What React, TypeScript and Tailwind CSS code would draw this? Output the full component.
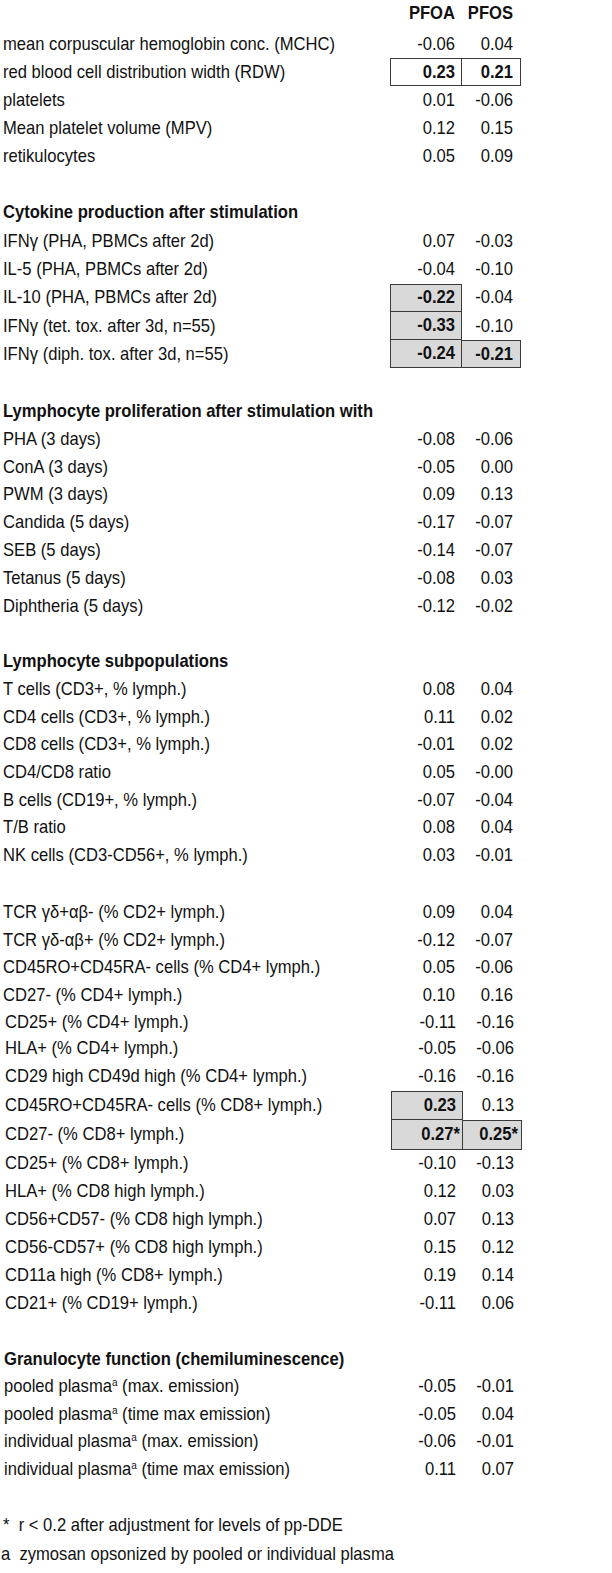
import type { ReactNode } from 'react';

type Row = {
  label?: ReactNode;
  a?: string;
  b?: string;
  h: string;
  head?: boolean;
  shift?: boolean;
  lp?: string;
  ac?: string;
  bc?: string;
};

const line = 'border-[#3a3a3a]';
const gray = 'bg-[#d9d9d9]';

// the source text is a little taller than plain Arial at the same width
const T = ({ children }: { children?: ReactNode }) => (
  <span className="inline-block whitespace-pre scale-y-[1.14]">{children}</span>
);

const Sup = () => <sup className="text-[10px] top-[-0.55em]">a</sup>;

const rows: Row[] = [
  { label: 'mean corpuscular hemoglobin conc. (MCHC)', a: '-0.06', b: '0.04', h: 'h-[28.2px]' },
  {
    label: 'red blood cell distribution width (RDW)', a: '0.23', b: '0.21', h: 'h-[28.2px]',
    ac: `border ${line} font-bold pr-[6px]`, bc: `border border-l-0 ${line} font-bold pr-[7px]`,
  },
  { label: 'platelets', a: '0.01', b: '-0.06', h: 'h-[28.2px]' },
  { label: 'Mean platelet volume (MPV)', a: '0.12', b: '0.15', h: 'h-[28.2px]' },
  { label: 'retikulocytes', a: '0.05', b: '0.09', h: 'h-[28.2px]' },
  { h: 'h-[27.7px]' },
  { label: 'Cytokine production after stimulation', head: true, h: 'h-[28.3px]' },
  { label: 'IFNγ (PHA, PBMCs after 2d)', a: '0.07', b: '-0.03', h: 'h-[28.3px]' },
  { label: 'IL-5 (PHA, PBMCs after 2d)', a: '-0.04', b: '-0.10', h: 'h-[28.3px]' },
  {
    label: 'IL-10 (PHA, PBMCs after 2d)', a: '-0.22', b: '-0.04', h: 'h-[28.3px]',
    ac: `border ${line} ${gray} font-bold pr-[6px]`,
  },
  {
    label: 'IFNγ (tet. tox. after 3d, n=55)', a: '-0.33', b: '-0.10', h: 'h-[28.3px]',
    ac: `border border-t-0 ${line} ${gray} font-bold pr-[6px]`,
  },
  {
    label: 'IFNγ (diph. tox. after 3d, n=55)', a: '-0.24', b: '-0.21', h: 'h-[28.3px]',
    ac: `border border-t-0 ${line} ${gray} font-bold pr-[6px]`,
    bc: `border border-l-0 ${line} ${gray} font-bold pr-[7px]`,
  },
  { h: 'h-[29.2px]' },
  { label: 'Lymphocyte proliferation after stimulation with', head: true, h: 'h-[27.8px]' },
  { label: 'PHA (3 days)', a: '-0.08', b: '-0.06', h: 'h-[27.8px]' },
  { label: 'ConA (3 days)', a: '-0.05', b: '0.00', h: 'h-[27.8px]' },
  { label: 'PWM (3 days)', a: '0.09', b: '0.13', h: 'h-[27.8px]' },
  { label: 'Candida (5 days)', a: '-0.17', b: '-0.07', h: 'h-[27.8px]' },
  { label: 'SEB (5 days)', a: '-0.14', b: '-0.07', h: 'h-[27.8px]' },
  { label: 'Tetanus (5 days)', a: '-0.08', b: '0.03', h: 'h-[27.8px]' },
  { label: 'Diphtheria (5 days)', a: '-0.12', b: '-0.02', h: 'h-[27.8px]' },
  { h: 'h-[28px]' },
  { label: 'Lymphocyte subpopulations', head: true, h: 'h-[27.7px]' },
  { label: 'T cells (CD3+, % lymph.)', a: '0.08', b: '0.04', h: 'h-[27.7px]' },
  { label: 'CD4 cells (CD3+, % lymph.)', a: '0.11', b: '0.02', h: 'h-[27.7px]' },
  { label: 'CD8 cells (CD3+, % lymph.)', a: '-0.01', b: '0.02', h: 'h-[27.7px]' },
  { label: 'CD4/CD8 ratio', a: '0.05', b: '-0.00', h: 'h-[27.7px]' },
  { label: 'B cells (CD19+, % lymph.)', a: '-0.07', b: '-0.04', h: 'h-[27.7px]' },
  { label: 'T/B ratio', a: '0.08', b: '0.04', h: 'h-[27.7px]' },
  { label: 'NK cells (CD3-CD56+, % lymph.)', a: '0.03', b: '-0.01', h: 'h-[27.7px]' },
  { h: 'h-[28.7px]' },
  { label: 'TCR γδ+αβ- (% CD2+ lymph.)', a: '0.09', b: '0.04', h: 'h-[27.9px]' },
  { label: 'TCR γδ-αβ+ (% CD2+ lymph.)', a: '-0.12', b: '-0.07', h: 'h-[27.9px]' },
  { label: 'CD45RO+CD45RA- cells (% CD4+ lymph.)', a: '0.05', b: '-0.06', h: 'h-[27.9px]' },
  { label: 'CD27- (% CD4+ lymph.)', a: '0.10', b: '0.16', h: 'h-[27.9px]' },
  { label: 'CD25+ (% CD4+ lymph.)', a: '-0.11', b: '-0.16', h: 'h-[25px]', shift: true },
  { label: 'HLA+ (% CD4+ lymph.)', a: '-0.05', b: '-0.06', h: 'h-[27px]', shift: true },
  { label: 'CD29 high CD49d high (% CD4+ lymph.)', a: '-0.16', b: '-0.16', h: 'h-[29px]', shift: true },
  {
    label: 'CD45RO+CD45RA- cells (% CD8+ lymph.)', a: '0.23', b: '0.13', h: 'h-[29px]', shift: true,
    ac: `border ${line} ${gray} font-bold pr-[6px]`,
  },
  {
    label: 'CD27- (% CD8+ lymph.)', a: '0.27*', b: '0.25*', h: 'h-[30px]', shift: true,
    ac: `border border-t-0 ${line} ${gray} font-bold pr-[2px]`,
    bc: `border border-l-0 ${line} ${gray} font-bold pr-[3px]`,
  },
  { label: 'CD25+ (% CD8+ lymph.)', a: '-0.10', b: '-0.13', h: 'h-[28px]', shift: true },
  { label: 'HLA+ (% CD8 high lymph.)', a: '0.12', b: '0.03', h: 'h-[28px]', shift: true },
  { label: 'CD56+CD57- (% CD8 high lymph.)', a: '0.07', b: '0.13', h: 'h-[28px]', shift: true },
  { label: 'CD56-CD57+ (% CD8 high lymph.)', a: '0.15', b: '0.12', h: 'h-[28px]', shift: true },
  { label: 'CD11a high (% CD8+ lymph.)', a: '0.19', b: '0.14', h: 'h-[28px]', shift: true },
  { label: 'CD21+ (% CD19+ lymph.)', a: '-0.11', b: '0.06', h: 'h-[28px]', shift: true },
  { h: 'h-[27.5px]' },
  { label: 'Granulocyte function (chemiluminescence)', head: true, h: 'h-[27.5px]', shift: true, lp: 'pl-[4px]' },
  { label: <>pooled plasma<Sup /> (max. emission)</>, a: '-0.05', b: '-0.01', h: 'h-[27.5px]', shift: true, lp: 'pl-[4px]' },
  { label: <>pooled plasma<Sup /> (time max emission)</>, a: '-0.05', b: '0.04', h: 'h-[27.5px]', shift: true, lp: 'pl-[4px]' },
  { label: <>individual plasma<Sup /> (max. emission)</>, a: '-0.06', b: '-0.01', h: 'h-[27.5px]', shift: true, lp: 'pl-[4px]' },
  { label: <>individual plasma<Sup /> (time max emission)</>, a: '0.11', b: '0.07', h: 'h-[27.5px]', shift: true, lp: 'pl-[4px]' },
  { h: 'h-[29px]' },
];

function TableRow({ r }: { r: Row }) {
  const cols = r.shift ? 'grid-cols-[391px_72px_59px]' : 'grid-cols-[390px_72px_59px]';
  const lp = r.lp ?? (r.shift ? 'pl-[5px]' : 'pl-[3px]');
  return (
    <div className={`grid ${cols} ${r.h}`}>
      <div className={`flex items-center whitespace-nowrap ${lp} ${r.head ? 'font-bold' : ''}`}>
        {r.label && <T>{r.label}</T>}
      </div>
      <div className={`flex items-center justify-end ${r.ac ?? 'pr-[7px]'}`}>{r.a && <T>{r.a}</T>}</div>
      <div className={`flex items-center justify-end ${r.bc ?? 'pr-[8px]'}`}>{r.b && <T>{r.b}</T>}</div>
    </div>
  );
}

export default function App() {
  return (
    <div className="w-[612px] min-h-[1573px] bg-white text-[#111] text-[16.6px] font-['Liberation_Sans',Arial,sans-serif]">
      <div className="grid grid-cols-[390px_72px_59px] h-[30px] font-bold">
        <div />
        <div className="flex items-center justify-end pr-[7px] pb-[4px]"><T>PFOA</T></div>
        <div className="flex items-center justify-end pr-[8px] pb-[4px]"><T>PFOS</T></div>
      </div>
      {rows.map((r, i) => (
        <TableRow key={i} r={r} />
      ))}
      <div className="flex items-center h-[28px] pl-[3px]">
        <T>*  r &lt; 0.2 after adjustment for levels of pp-DDE</T>
      </div>
      <div className="flex items-center h-[30px] pl-[1px]">
        <T>a  zymosan opsonized by pooled or individual plasma</T>
      </div>
    </div>
  );
}
